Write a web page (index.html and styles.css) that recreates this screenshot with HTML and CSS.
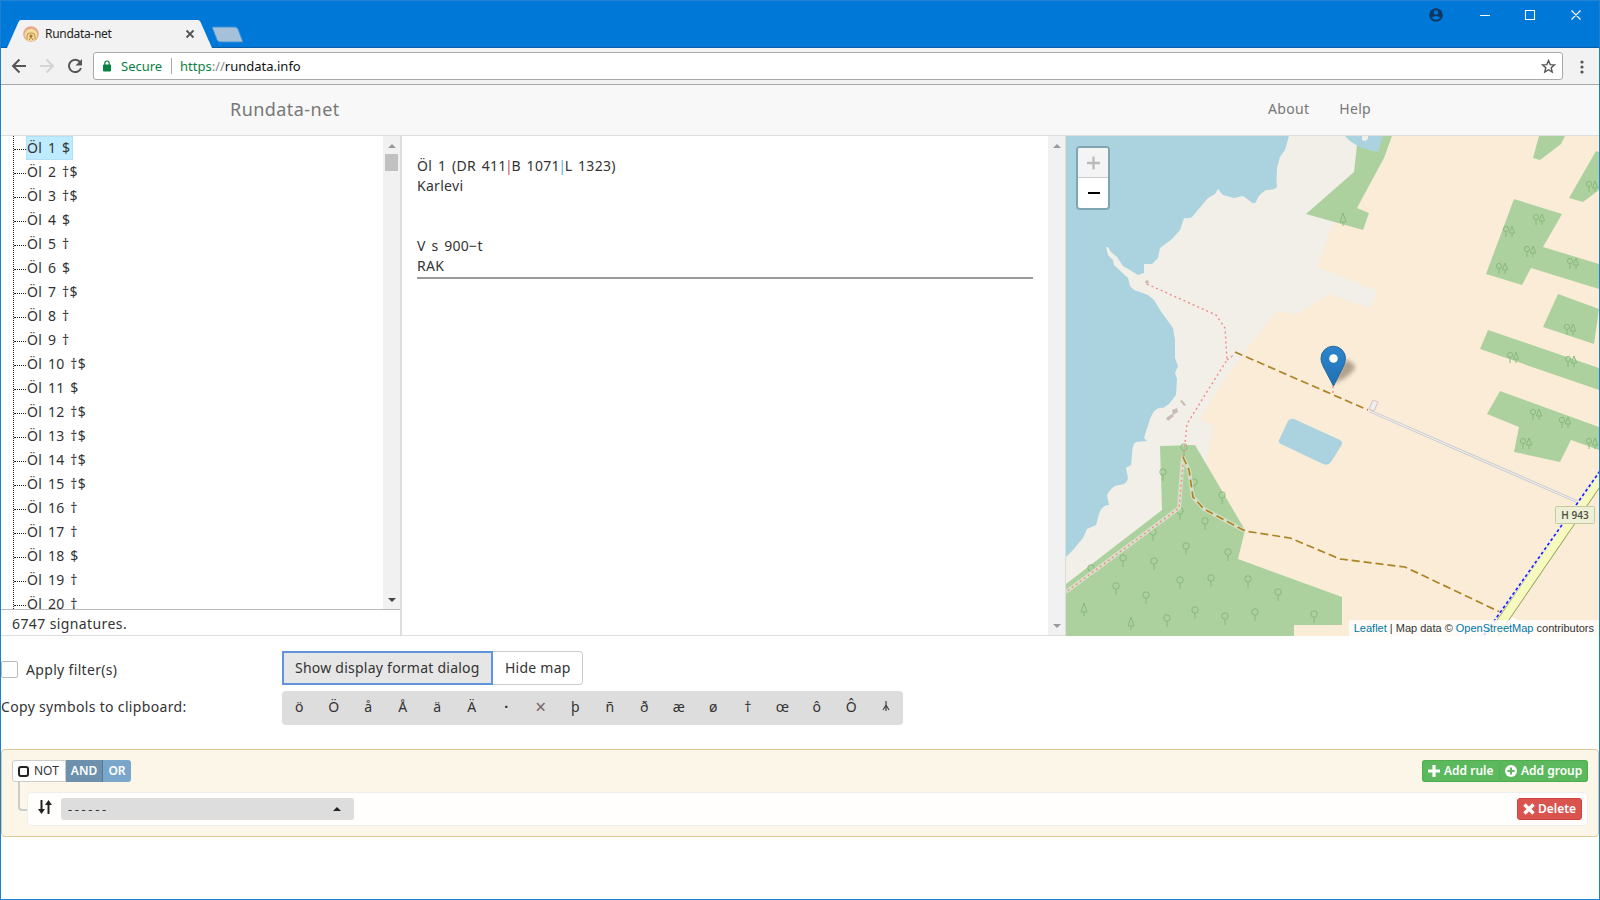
FILE: index.html
```html
<!DOCTYPE html>
<html lang="en">
<head>
<meta charset="utf-8">
<title>Rundata-net</title>
<link rel="stylesheet" href="styles.css">
</head>
<body>
<div class="window">
  <header class="titlebar">
    <svg class="tabs" width="260" height="48" viewBox="0 0 260 48">
      <path d="M7 48 L18.500 22 Q19.500 20 21 20 H198 Q199.500 20 200.500 22 L212 48Z" fill="#f2f2f2"/>
      <path d="M212 27 H235 Q237 27 238 29 L243 42 H220 Q218 42 217 40Z" fill="#a5c1d9" stroke="#3b8ed4"/>
      <circle cx="31" cy="34" r="7.800" fill="#e8a58c"/><circle cx="31" cy="35" r="6.300" fill="#f3dc9a"/>
      <path d="M27 39.500v-3q0-3.500 4-3.500t4 3.500v3" fill="none" stroke="#c39a4c" stroke-width="1.100"/><circle cx="31" cy="36" r="1.600" fill="#b0713f"/><path d="M29 40l2-3 2 3" fill="none" stroke="#b0843f"/>
      <path d="M186.500 30.500l7 7m0-7l-7 7" stroke="#555" stroke-width="1.800"/>
    </svg>
    <span class="tab-title">Rundata-net</span>
    <svg class="controls" width="180" height="30" viewBox="1420 0 180 30">
      <circle cx="1436" cy="15" r="6.800" fill="#0b3861"/><circle cx="1436" cy="12.500" r="2.300" fill="#0078d7"/><path d="M1431.500 17.500q4.500-3 9 0q-4.500 4.500-9 0" fill="#0078d7"/>
      <path d="M1480 15.500h10M1525.500 10.500h9v9h-9zM1571.500 10.500l9 9m0-9l-9 9" fill="none" stroke="#fff" stroke-width="1.100"/>
    </svg>
  </header>
  <div class="toolbar">
    <svg class="nav-icons" width="92" height="36" viewBox="0 48 92 36">
      <path d="M26 66H13.500m6-6.500L13 66l6.500 6.500" fill="none" stroke="#555" stroke-width="2"/>
      <path d="M40 66h12.500m-6-6.500L53 66l-6.500 6.500" fill="none" stroke="#d4d4d4" stroke-width="2"/>
      <path d="M80 62a6.200 6.200 0 1 0 1 6" fill="none" stroke="#555" stroke-width="2"/><path d="M82 59v6.500h-6.500z" fill="#555"/>
    </svg>
    <div class="address">
      <svg width="10" height="12" viewBox="0 0 10 12"><rect x="1" y="4.500" width="8" height="7" rx=".8" fill="#0b8043"/><path d="M2.800 5V3.200a2.200 2.200 0 0 1 4.400 0V5" fill="none" stroke="#0b8043" stroke-width="1.200"/></svg>
      <span class="secure">Secure</span><i class="address-sep"></i><span class="url"><b>https</b><em>://</em>rundata.info</span>
      <svg class="star" width="15" height="15" viewBox="0 0 15 15"><path d="M7.500 1.600l1.700 4 4.300.3-3.300 2.800 1 4.300-3.700-2.300L3.800 13l1-4.300L1.500 5.900l4.300-.3z" fill="none" stroke="#555" stroke-width="1.400"/></svg>
    </div>
    <svg class="dots" width="4" height="14" viewBox="0 0 4 14" fill="#555"><circle cx="2" cy="2" r="1.600"/><circle cx="2" cy="7" r="1.600"/><circle cx="2" cy="12" r="1.600"/></svg>
  </div>
  <nav class="navbar"><span class="brand">Rundata-net</span><span class="nav-link about">About</span><span class="nav-link">Help</span></nav>
  <main class="panes">
    <section class="left">
      <div class="tree-wrap">
        <ul class="tree">
          <li><span class="selected">Öl 1 $</span></li><li><span>Öl 2 †$</span></li><li><span>Öl 3 †$</span></li><li><span>Öl 4 $</span></li><li><span>Öl 5 †</span></li><li><span>Öl 6 $</span></li><li><span>Öl 7 †$</span></li><li><span>Öl 8 †</span></li><li><span>Öl 9 †</span></li><li><span>Öl 10 †$</span></li><li><span>Öl 11 $</span></li><li><span>Öl 12 †$</span></li><li><span>Öl 13 †$</span></li><li><span>Öl 14 †$</span></li><li><span>Öl 15 †$</span></li><li><span>Öl 16 †</span></li><li><span>Öl 17 †</span></li><li><span>Öl 18 $</span></li><li><span>Öl 19 †</span></li><li><span>Öl 20 †</span></li>
        </ul>
        <div class="scroll"><i class="up"></i><i class="thumb"></i><i class="down"></i></div>
      </div>
      <div class="count">6747 signatures.</div>
    </section>
    <section class="middle">
      <article><p>Öl 1 (DR 411<s class="bar1">|</s>B 1071<s class="bar2">|</s>L 1323)</p><p>Karlevi</p><p class="gap"></p><p>V s 900−t</p><p>RAK</p><hr></article>
      <div class="scroll idle"><i class="up"></i><i class="down"></i></div>
    </section>
    <section class="map">
      <svg width="533" height="500" viewBox="1066 136 533 500">
        <defs>
          <g id="dec" fill="none" stroke="#8ab87d"><circle cx="0" cy="-3" r="3.200"/><path d="M0 0v6"/></g>
          <g id="con" fill="none" stroke="#8ab87d"><path d="M0-6l-3 9h6zM0 3v4"/></g>
          <g id="mix" fill="none" stroke="#8ab87d"><circle cx="-3" cy="-2" r="2.600"/><path d="M-3 0v6M3-5l-2.700 7h5.400zM3 2v4"/></g>
          <linearGradient id="pin" x2="0" y2="1"><stop stop-color="#2e85cb"/><stop offset="1" stop-color="#2070b4"/></linearGradient>
          <filter id="soft"><feGaussianBlur stdDeviation="2"/></filter>
        </defs>
        <rect x="1066" y="136" width="533" height="500" fill="#f2efe9"/>
        <path fill="#aad3df" d="M1066 136H1289L1285 150 1280 157 1277 168 1276.500 180 1277 187Q1275 190 1266 190 1258 195 1256 202 1253 205 1250 201L1243 196 1234 198 1223 195 1218 189 1215 194 1208 198 1192 217Q1189 219 1184 218L1180 230 1172 239 1160 248 1158 258 1152 264H1144V273L1138 275 1123 266 1117 257 1111 252 1108 247H1106L1108 255 1113 260 1114 265 1128 278 1130 286 1134 290 1148 295 1154 300 1160 310 1173 328 1175 340V358L1178 366 1175 373 1177 379 1176 395 1169 404 1163 408Q1155 406 1150 419L1144 438 1147 441 1136 442Q1132 444 1132 455L1131 465 1126 468 1128 478Q1127 484 1120 485 1113 484 1107 495L1109 505Q1102 505 1099 514L1096 525 1087 529 1083 538 1073 550 1066 557Z"/>
        <path fill="#fbecd7" d="M1392 136H1599V636H1200V480L1207 455 1214 426 1200 419 1222 383 1250 345 1277 311 1297 314 1329 294 1370 308 1378 291 1317 267 1334 222 1350 200 1384 158Z"/>
        <g fill="#acd19e">
          <path d="M1392 136L1384 158 1357 208 1369 213 1363 230 1306 214 1354 172 1358 136Z"/><path d="M1539 136H1565L1561 144 1540 160 1533 158Z"/><path d="M1596 151L1599 152V190L1583 202 1569 198Z"/><path d="M1514 199L1562 214 1543 247 1599 264V289L1531 268 1522 285 1486 274Z"/><path d="M1558 294L1599 309 1594 344 1543 327Z"/><path d="M1488 330L1599 368V390L1480 349Z"/><path d="M1500 391L1599 427V450L1571 440 1560 462 1514 452 1519 427 1487 414Z"/><path d="M1160 446L1195 445 1245 530 1238 559 1342 597V625H1294V636H1066V584L1162 510Z"/>
        </g>
        <path d="M1345 136Q1355 148 1378 152L1383 136Z" fill="#aad3df"/><path d="M1362 136h6v3l-3 2-3-1z" fill="#f2efe9"/>
        <path d="M1288 421Q1290 418 1294 419L1340 440Q1344 442 1341 446L1331 462Q1328 466 1323 464L1281 444Q1277 442 1280 438Z" fill="#aad3df"/>
        <g fill="#c9bdb5"><path d="M1180 401l2-1 4 5-2 1zM1172 410l5-2 1 4-5 3zM1166 418l6-4 2 2-6 5z"/></g>
        <use href="#dec" x="1163" y="475"/><use href="#dec" x="1194" y="485"/><use href="#dec" x="1222" y="498"/><use href="#dec" x="1180" y="514"/><use href="#dec" x="1205" y="524"/><use href="#dec" x="1153" y="535"/><use href="#dec" x="1186" y="549"/><use href="#dec" x="1228" y="555"/><use href="#dec" x="1123" y="561"/><use href="#dec" x="1154" y="564"/><use href="#dec" x="1091" y="571"/><use href="#dec" x="1180" y="583"/><use href="#dec" x="1211" y="581"/><use href="#dec" x="1248" y="582"/><use href="#dec" x="1116" y="589"/><use href="#dec" x="1146" y="598"/><use href="#dec" x="1278" y="595"/><use href="#dec" x="1195" y="613"/><use href="#dec" x="1225" y="619"/><use href="#dec" x="1255" y="615"/><use href="#dec" x="1167" y="621"/><use href="#dec" x="1314" y="617"/><use href="#dec" x="1184" y="450"/><use href="#con" x="1084" y="609"/><use href="#con" x="1131" y="623"/><use href="#con" x="1343" y="219"/>
        <use href="#mix" x="1509" y="231"/><use href="#mix" x="1539" y="219"/><use href="#mix" x="1530" y="251"/><use href="#mix" x="1502" y="268"/><use href="#mix" x="1573" y="263"/><use href="#mix" x="1592" y="186"/><use href="#mix" x="1570" y="329"/><use href="#mix" x="1513" y="357"/><use href="#mix" x="1571" y="361"/><use href="#mix" x="1536" y="414"/><use href="#mix" x="1565" y="422"/><use href="#mix" x="1526" y="443"/><use href="#mix" x="1592" y="443"/>
        <g fill="none">
          <path d="M1183 457L1179 508 1066 592" stroke="#d7dfc8" stroke-width="4"/>
          <path d="M1147 284L1216 315 1225 328 1227 360 1208 390 1187 424 1185 443 1179 508 1066 592M1227 360l8-6M1333 386v10" stroke="#f58a8a" stroke-width="1.400" stroke-dasharray="2 3"/>
          <path d="M1183 457L1189 470 1193 497 1204 509 1245 531" stroke="#d5dfc5" stroke-width="4"/>
          <path d="M1235 352L1368 410M1183 457L1189 470 1193 497 1204 509 1245 531 1290 538 1340 559 1405 567 1502 613" stroke="#ac8327" stroke-width="1.700" stroke-dasharray="8 4"/>
          <path d="M1370 411L1578 502" stroke="#c9cdd2" stroke-width="3"/><path d="M1370 411L1578 502" stroke="#f7f2ed"/>
          <path d="M1369 409l4-9 5 2-4 9z" fill="#eee" stroke="#d3c4c4"/>
          <path d="M1503 615l30 15" stroke="#fff" stroke-width="4"/>
          <path d="M1605.700 470L1492 636" stroke="#8f9c54" stroke-width="10.500"/><path d="M1605.700 470L1492 636" stroke="#f7fabf" stroke-width="8.800"/>
          <path d="M1600 471L1497 617 1484 635" stroke="#f2eee9" stroke-width="2.600"/><path d="M1600 471L1497 617 1484 635" stroke="#1d23ff" stroke-width="1.700" stroke-dasharray="3 2.500"/>
        </g>
        <circle cx="1147" cy="282" r="1.800" fill="#c9b8b2"/>
        <rect x="1555.500" y="506.500" width="39" height="17" rx="1" fill="#edf0d6" stroke="#c5ca9c"/><text x="1575" y="519" class="road">H 943</text>
        <path d="M1333 384L1344 360Q1353 360 1355 368 1350 377 1333 384Z" fill="#403020" opacity=".4" filter="url(#soft)"/>
        <path d="M1333.500 386L1323 366Q1321 362 1321 358.500A12 12 0 0 1 1345.500 358.500Q1345 362 1343.500 366Z" fill="url(#pin)" stroke="#2367a0"/><circle cx="1333.500" cy="358.500" r="4.300" fill="#fff"/>
      </svg>
      <div class="zoom-control"><svg width="30" height="60" viewBox="0 0 30 60"><path d="M0 0h30v29.500H0z" fill="#f4f4f4"/><path d="M0 29.500h30" stroke="#ccc"/><path d="M9 15h13M15.500 8.500v13" stroke="#bbb" stroke-width="2.300"/><path d="M10 45h12" stroke="#000" stroke-width="2"/></svg></div>
      <div class="attribution"><a>Leaflet</a> | Map data © <a>OpenStreetMap</a> contributors</div>
    </section>
  </main>
  <section class="options">
    <div class="option-row first"><span class="label"><i class="checkbox"></i><span class="apply">Apply filter(s)</span></span><span class="button active">Show display format dialog</span><span class="button last">Hide map</span></div>
    <div class="option-row"><span class="label copy">Copy symbols to clipboard:</span>
      <div class="symbols"><span>ö</span><span>Ö</span><span>å</span><span>Å</span><span>ä</span><span>Ä</span><span class="dot">·</span><span class="cross">×</span><span>þ</span><span>ñ</span><span>ð</span><span>æ</span><span>ø</span><span>†</span><span>œ</span><span>ô</span><span>Ô</span><span><svg width="8" height="12" viewBox="0 0 8 12"><path d="M4 1v10M4 5L1 10M4 5l3 5" fill="none" stroke="#444" stroke-width="1.200"/></svg></span></div>
    </div>
  </section>
  <section class="builder">
    <div class="group-head">
      <span class="not"><i></i>NOT</span><span class="cond and">AND</span><span class="cond or">OR</span>
      <span class="green add-rule"><svg width="12" height="12" viewBox="0 0 12 12"><path d="M6 0v12M0 6h12" stroke="#fff" stroke-width="3.200"/></svg>Add rule</span>
      <span class="green add-group"><svg width="12" height="12" viewBox="0 0 12 12"><circle cx="6" cy="6" r="6" fill="#fff"/><path d="M6 2.500v7M2.500 6h7" stroke="#5cb85c" stroke-width="2"/></svg>Add group</span>
    </div>
    <div class="rule-line"><i class="elbow"></i>
      <div class="rule"><svg width="14" height="14" viewBox="0 0 14 14"><path d="M3.500 0v11M10.500 3v11" stroke="#222" stroke-width="2"/><path d="M0 9h7l-3.500 5zM7 5h7L10.500 0z" fill="#222"/></svg><span class="select">------<i class="up"></i></span>
      <span class="delete"><svg width="12" height="12" viewBox="0 0 12 12"><path d="M1.500 1.500l9 9m0-9l-9 9" stroke="#fff" stroke-width="3.400"/></svg>Delete</span></div>
    </div>
  </section>
</div>
</body>
</html>
```
FILE: styles.css
```css
* { box-sizing: border-box; }
body { margin: 0; background: #fff; color: #333; font: 14px/20px "Noto Sans", sans-serif; letter-spacing: .3px; }
.window { width: 1600px; height: 900px; border: solid #1b80d2; border-width: 0 1px 1px; overflow: hidden; }
.titlebar { height: 48px; background: #0078d7; border-top: 1px solid #2384d6; border-bottom: 1px solid #0b5ca3; position: relative; display: flex; justify-content: space-between; }
.tabs { position: absolute; left: -1px; top: -1px; }
.tab-title { padding: 23px 0 0 44px; z-index: 1; font-size: 12px; letter-spacing: -.3px; color: #222; }
.controls { margin-top: -1px; margin-right: -1px; }
.toolbar { height: 37px; background: #f2f2f2; border-bottom: 1px solid #aaa; display: flex; align-items: flex-start; }
.nav-icons { margin-left: -1px; flex: none; }
.address { margin: 4px 0 0 1px; width: 1470px; height: 28px; background: #fff; border: 1px solid #aaa; border-radius: 3px; display: flex; align-items: center; padding: 0 6px 0 8px; font-size: 13px; letter-spacing: 0; }
.secure { color: #0b8043; margin-left: 9px; width: 50px; }
.address-sep { width: 1px; height: 16px; background: #aaa; margin-right: 8px; }
.url { color: #111; }
.url b { font-weight: 400; color: #0b8043; }
.url em { font-style: normal; color: #888; }
.star { margin-left: auto; }
.dots { margin: 12px 0 0 17px; }
.navbar { height: 51px; background: #f8f8f8; border-bottom: 1px solid #ddd; display: flex; color: #777; padding: 14px 228px 0 229px; }
.brand { font-size: 18px; letter-spacing: .45px; }
.about { margin-left: auto; margin-right: 30px; }
.panes { height: 500px; border-bottom: 1px solid #ddd; display: flex; }
.left { width: 401px; border-right: 2px solid #ddd; display: flex; flex-direction: column; }
.tree-wrap { height: 474px; overflow: hidden; display: flex; border-bottom: 1px solid #bbb; }
.tree { list-style: none; margin: 0 0 0 12px; padding: 0; flex: 1; border-left: 1px dotted #222; }
.tree li { height: 24px; display: flex; align-items: flex-start; }
.tree li::before { content: ""; width: 12px; border-top: 1px dotted #222; margin-top: 13px; }
.tree span { height: 24px; line-height: 24px; padding: 0 3px 0 1px; word-spacing: 1.8px; }
.tree .selected { background: #beebff; box-shadow: inset 0 0 1px #68a; border-radius: 1px; }
.scroll { width: 17px; background: #f1f1f1; display: flex; flex-direction: column; align-items: center; padding: 8px 0 7px; }
.up, .down { border: solid transparent; border-width: 0 4px 4px; border-bottom-color: #999; width: 0; height: 0; }
.down { border-width: 4px 4px 0; border-top-color: #444; margin-top: auto; }
.thumb { width: 13px; height: 17px; background: #c1c1c1; margin-top: 6px; }
.idle .down { border-top-color: #999; }
.count { padding: 4px 0 0 11px; letter-spacing: .4px; }
.middle { width: 664px; display: flex; border-right: 1px solid #ddd; }
.middle article { flex: 1; padding: 20px 15px 0 15px; letter-spacing: .3px; word-spacing: 1.8px; }
.middle p { margin: 0; height: 20px; }
.middle .gap { height: 40px; }
.middle s { text-decoration: none; margin: 0 -1.600px; }
.bar1 { color: #b55; }
.bar2 { color: #5ad; }
.middle hr { border: 0; height: 2px; background: #999; margin: 1px 0; }
.map { flex: 1; position: relative; margin-bottom: -1px; }
.map > svg { display: block; }
.road { font: 600 10px "Open Sans", sans-serif; letter-spacing: 0; fill: #4b4e3c; text-anchor: middle; }
.zoom-control { position: absolute; left: 11px; top: 11px; border: 1px solid #7fa5b0; box-shadow: 0 0 0 1px #7fa5b0; border-radius: 3px; overflow: hidden; background: #fff; width: 32px; height: 62px; }
.attribution { position: absolute; right: 0; bottom: 0; height: 16px; line-height: 16px; padding: 0 5px; background: #fffc; font-family: "Liberation Sans", sans-serif; font-size: 11px; letter-spacing: 0; white-space: nowrap; }
.attribution a { color: #0078a8; }
.options { height: 113px; padding-top: 15px; }
.option-row { display: flex; height: 40px; }
.label { width: 281px; display: flex; letter-spacing: .33px; }
.checkbox { width: 17px; height: 17px; border: 1px solid #bbb; border-radius: 2px; margin: 10px 8px 0 0; }
.apply { padding-top: 9px; }
.button { height: 34px; border: 1px solid #ccc; padding: 6px 11px 6px 12px; white-space: nowrap; line-height: 19px; letter-spacing: .24px; }
.active { width: 211px; background: #e6e6e6; border: 2px solid #6193dd; padding: 5px 11px; }
.last { border-left: 0; border-radius: 0 4px 4px 0; width: 90px; }
.copy { padding-top: 6px; }
.symbols { width: 621px; height: 34px; background: #ddd; border-radius: 4px; display: flex; padding: 6px 0 0 0; }
.symbols span { width: 34.500px; text-align: center; letter-spacing: 0; }
.symbols .cross { color: #766; font-size: 19px; }
.symbols .dot { font-weight: 700; }
.builder { height: 88px; border: 1px solid #dcc896; border-radius: 4px; background: #fcf6e8; padding: 10px; }
.group-head { display: flex; height: 22px; font-size: 12px; letter-spacing: 0; }
.not { width: 54px; border: 1px solid #ccc; background: #fff; display: flex; align-items: center; padding-left: 5px; border-radius: 3px 0 0 3px; }
.not i { width: 11px; height: 11px; border: 2px solid #222; border-radius: 3px; margin-right: 5px; }
.cond { color: #fff; font-weight: 600; text-align: center; line-height: 22px; }
.and { background: #6d91ad; width: 37px; border-right: 1px solid #527b9b; }
.or { background: #79a6c9; width: 28px; border-radius: 0 3px 3px 0; }
.green, .delete { color: #fff; background: #5cb85c; border: 1px solid #4cae4c; display: flex; align-items: center; gap: 5px; padding-left: 5px; font-size: 12px; font-weight: 600; height: 22px; white-space: nowrap; letter-spacing: 0; }
.add-rule { margin-left: auto; width: 77px; border-radius: 3px 0 0 3px; border-right: 0; gap: 4px; }
.add-group { width: 89px; border-radius: 0 3px 3px 0; gap: 4px; border-left-color: #55b055; }
.rule-line { display: flex; padding-left: 6px; }
.elbow { width: 9px; height: 29px; border: solid #ccc; border-width: 0 0 2px 2px; border-radius: 0 0 0 4px; }
.rule { flex: 1; margin-top: 10px; height: 34px; background: #fffefd; border: 1px solid #eee; border-radius: 4px; display: flex; align-items: center; padding: 0 5px 0 10px; }
.rule > svg { margin-right: 9px; margin-top: -4px; }
.select { width: 293px; height: 22px; background: #ddd; border-radius: 3px; padding: 0 13px 0 7px; display: flex; align-items: center; justify-content: space-between; font-size: 13px; letter-spacing: 2.600px; }
.select .up { border-bottom-color: #222; }
.delete { margin-left: auto; width: 65px; background: #d9534f; border-color: #d43f3a; border-radius: 3px; gap: 3px; padding-left: 5px; }
```
